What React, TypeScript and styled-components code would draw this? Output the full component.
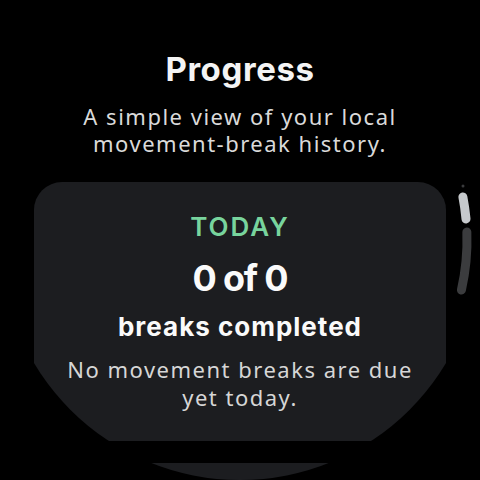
import { createGlobalStyle, styled } from "styled-components";

const GlobalStyle = createGlobalStyle`
  html, body {
    margin: 0;
    padding: 0;
    background: #000;
  }
  * {
    box-sizing: border-box;
  }
`;

const Screen = styled.div`
  position: relative;
  width: 480px;
  height: 480px;
  border-radius: 50%;
  overflow: hidden;
  background: #000;
  display: flex;
  flex-direction: column;
  align-items: center;
  padding-top: 49px;
`;

const Title = styled.h1`
  margin: 0;
  font-family: Inter, Roboto, sans-serif;
  font-weight: 700;
  font-size: 33px;
  line-height: 40px;
  letter-spacing: 0.6px;
  color: #f4f4f4;
`;

const Subtitle = styled.p`
  margin: 14px 0 0;
  font-family: "Noto Sans", "Open Sans", sans-serif;
  font-size: 22px;
  line-height: 27px;
  letter-spacing: 1.5px;
  color: #dadada;
  text-align: center;
`;

const Card = styled.section`
  margin-top: 25px;
  width: 412px;
  flex-shrink: 0;
  background: #1c1d20;
  border-radius: 28px;
  display: flex;
  flex-direction: column;
  align-items: center;
  padding: 29px 6px 30px;
  text-align: center;
`;

const Label = styled.div`
  font-family: Inter, Roboto, sans-serif;
  font-weight: 600;
  font-size: 26px;
  line-height: 32px;
  letter-spacing: 2px;
  color: #78d49d;
`;

const Count = styled.div`
  margin-top: 13px;
  font-family: Inter, Roboto, sans-serif;
  font-weight: 700;
  font-size: 36px;
  line-height: 44px;
  letter-spacing: -1.2px;
  color: #fafafa;
`;

const CountCaption = styled.div`
  margin-top: 12px;
  font-family: Inter, Roboto, sans-serif;
  font-weight: 700;
  font-size: 26px;
  line-height: 30px;
  letter-spacing: 1px;
  color: #fafafa;
`;

const Note = styled.p`
  margin: 13px 0 0;
  font-family: "Noto Sans", "Open Sans", sans-serif;
  font-size: 22px;
  line-height: 28px;
  letter-spacing: 1.5px;
  color: #d6d6d6;
`;

const NextCard = styled.div`
  margin-top: 22px;
  width: 412px;
  height: 80px;
  flex-shrink: 0;
  background: #1c1d20;
  border-radius: 28px;
`;

const Indicator = styled.svg`
  position: absolute;
  inset: 0;
  pointer-events: none;
`;

const R = 227;
const arcX = (y: number) => 240 + Math.sqrt(R * R - (y - 240) * (y - 240));
const arc = (y1: number, y2: number) =>
  `M ${arcX(y1)} ${y1} A ${R} ${R} 0 0 1 ${arcX(y2)} ${y2}`;

function ScrollIndicator() {
  return (
    <Indicator width="480" height="480" viewBox="0 0 480 480">
      <circle cx="463" cy="186" r="1.5" fill="#3a3b3d" />
      <path d={arc(232, 290)} stroke="#3b3c3e" strokeWidth="9" strokeLinecap="round" fill="none" />
      <path d={arc(197, 219)} stroke="#c6c9cc" strokeWidth="9" strokeLinecap="round" fill="none" />
    </Indicator>
  );
}

export default function App() {
  return (
    <>
      <GlobalStyle />
      <Screen>
        <Title>Progress</Title>
        <Subtitle>
          A simple view of your local
          <br />
          movement-break history.
        </Subtitle>
        <Card>
          <Label>TODAY</Label>
          <Count>0 of 0</Count>
          <CountCaption>breaks completed</CountCaption>
          <Note>
            No movement breaks are due
            <br />
            yet today.
          </Note>
        </Card>
        <NextCard />
        <ScrollIndicator />
      </Screen>
    </>
  );
}
